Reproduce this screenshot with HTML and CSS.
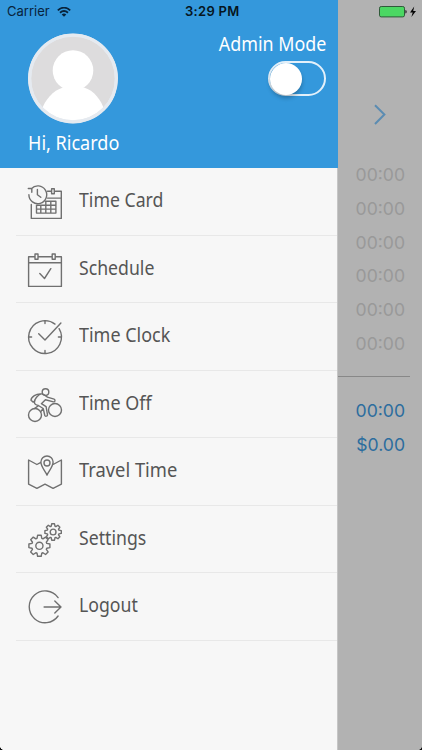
FILE: index.html
```html
<!DOCTYPE html>
<html lang="en">
<head>
<meta charset="utf-8">
<title>Time Menu</title>
<link rel="stylesheet" href="styles.css">
</head>
<body>
<div class="screen">
  <aside class="drawer">
    <header class="profile">
      <div class="person">
        <svg class="avatar" viewBox="0 0 90 90">
          <defs><clipPath id="face"><circle cx="45" cy="45" r="42"/></clipPath></defs>
          <circle cx="45" cy="45" r="45" fill="#e5eaf0"/>
          <circle cx="45" cy="45" r="42" fill="#dddcdd"/>
          <g clip-path="url(#face)" fill="#fff"><circle cx="45" cy="37" r="20.3"/><path d="M13 78C17 66 25 57 35 54Q45 52 56 54C66 57 73 66 77 78V90H13Z"/></g>
          <circle cx="45" cy="45" r="43.2" fill="none" stroke="#e5eaf0" stroke-width="3"/>
        </svg>
        <div class="greeting"><span>Hi, Ricardo</span></div>
      </div>
      <div class="mode"><span class="mode-label">Admin Mode</span><div class="toggle"><div class="knob"></div></div></div>
    </header>
    <nav class="menu">
      <div class="item"><svg class="icon" viewBox="0 0 34 34"><path d="M19.5 6.3h4M27.5 6.3H33.3V33.4H3.3V19.5M19.5 13.1H33.3M23.6 3.8h2.7v5h-2.7zM17.3 16.3H27.9V28.1H8.5V20.2H27.9M8.5 24.1H27.9M12.8 20.2v7.9M17.8 16.3v11.8M22.8 16.3v11.8"/><path d="M3.3 3.7A8.9 8.9 0 1 1 .9 9.8M.3 3.5h3.5v3.7M9.4 4.5v5.3l3.4 2.5"/></svg><span>Time Card</span></div>
      <div class="item"><svg class="icon" viewBox="0 0 34 34"><path d="M7 3.7H.6V33.4H33.4V3.7H27.2M10 3.7H24.2M.6 9.7H33.4M7 1h3v5.3H7zM24.2 1h3v5.3h-3zM11.8 20.5l4.7 5 6.3-9.8"/></svg><span>Schedule</span></div>
      <div class="item medium"><svg class="icon" viewBox="0 0 34 34"><path d="M27 4.1A16.4 16.4 0 1 0 31.1 8.7M17 .6v3M17 30.4v3M.6 17h3M30.4 17h3M10.7 13.8L17 20 32.9 3"/></svg><span>Time Clock</span></div>
      <div class="item medium"><svg class="icon" viewBox="0 0 34 34"><circle cx="7" cy="27" r="6.5"/><circle cx="27" cy="22" r="6.5"/><circle cx="17.5" cy="4.1" r="3.3"/><path d="M13.2 5.9C8.5 5.5 3 8.5 3 12.3L5.2 14.1 7 12.7M13.2 5.9C10 6.5 6.2 11.4 6.4 14.2C6.5 16.2 8 17 10.4 17.5L15.2 20.5 16.8 27.5C17.3 28.7 19.5 28.3 19.5 26.9L18.1 18.7 13.4 15.7 17.4 11.7 25.5 13.9C27.2 14 27.5 11.8 26.1 11.2L19.4 9.1C17.5 7.8 15.5 5.7 13.2 5.9M10.5 17.6L6.5 20.5M15 20.6L12.5 24"/></svg><span>Time Off</span></div>
      <div class="item wide"><svg class="icon" viewBox="0 0 34 34"><path d="M12.9 7.4L8.9 9.5.6 5V29.2L8.9 33.4 17 29.2 25.1 33.4 33.4 29.2V5L25.1 9.5M19 20.1C17.2 16.1 12.9 11.8 12.9 7.1A6.1 6.1 0 0 1 25.1 7.1C25.1 11.8 20.8 16.1 19 20.1Z"/><circle cx="19" cy="8" r="3"/></svg><span>Travel Time</span></div>
      <div class="item"><svg class="icon" viewBox="0 0 34 34"><defs><path id="gear" vector-effect="non-scaling-stroke" d="M-2.4-7.4L-1.8-10.5H1.8L2.4-7.4 3.54-6.93 6.15-8.7 8.7-6.15 6.93-3.54 7.4-2.4 10.5-1.8V1.8L7.4 2.4 6.93 3.54 8.7 6.15 6.15 8.7 3.54 6.93 2.4 7.4 1.8 10.5H-1.8L-2.4 7.4-3.54 6.93-6.15 8.7-8.7 6.15-6.93 3.54-7.4 2.4-10.5 1.8V-1.8L-7.4-2.4-6.93-3.54-8.7-6.15-6.15-8.7-3.54-6.93Z"/></defs><use href="#gear" transform="translate(11.4 22.8)"/><circle cx="11.4" cy="22.8" r="3.6"/><use href="#gear" transform="translate(25.1 9) scale(.78)"/><circle cx="25.1" cy="9" r="2.9"/></svg><span>Settings</span></div>
      <div class="item"><svg class="icon" viewBox="0 0 34 34"><path d="M30.1 7.6A15.9 15.9 0 1 0 30.1 26M16.1 17H33M26.8 10.9L33 17 26.8 23"/></svg><span>Logout</span></div>
    </nav>
  </aside>
  <main class="sheet">
    <svg class="next" viewBox="0 0 12 20"><path d="M1 .8L10.4 10 1 19.5"/></svg>
    <div class="hours"><div><span>00:00</span></div><div><span>00:00</span></div><div><span>00:00</span></div><div><span>00:00</span></div><div><span>00:00</span></div><div><span>00:00</span></div></div>
    <div class="totals"><div><span>00:00</span></div><div><span>$0.00</span></div></div>
  </main>
  <div class="status">
    <span class="carrier">Carrier</span>
    <svg class="wifi" viewBox="0 0 14 10"><path d="M.8 3.4Q7-2.1 13.2 3.4M3 5.8Q7 2.3 11 5.8" fill="none" stroke="#08233b" stroke-width="1.8"/><path d="M4.7 7.4Q7 5.5 9.3 7.4L7 9.7Z" fill="#08233b"/></svg>
    <span class="clock">3:29 PM</span>
    <svg class="battery" viewBox="0 0 38 12"><rect x=".5" y=".5" width="25" height="10.4" rx="1.7" fill="#4bd763" stroke="#30593a"/><path d="M26.4 4q1.3.1 1.3 1.8t-1.3 1.8z" fill="#222"/><path d="M35.2.6L31 6.5h2.7L32.4 11 37 4.9h-2.8z" fill="#050505"/></svg>
  </div>
  <i class="corner left"></i><i class="corner right"></i>
</div>
</body>
</html>
```
FILE: styles.css
```css
* { box-sizing: border-box; }
body { margin: 0; }
.screen { position: relative; display: flex; width: 422px; height: 750px; overflow: hidden; background: #b2b2b2; }
.drawer { width: 338px; height: 750px; background: #f7f7f7; font: 19px/26px "Noto Sans", sans-serif; border-right: 1px solid #c6c6c6; }
.profile { display: flex; justify-content: space-between; height: 168px; margin-right: -1px; padding: 33px 12px 0 28px; background: #3498dc; color: #fff; }
.avatar { display: block; width: 90px; height: 91px; }
.greeting { margin-top: 6px; white-space: nowrap; }
.greeting span { display: inline-block; transform: scaleX(.95); transform-origin: left; }
.mode { display: flex; flex-direction: column; align-items: flex-end; margin-top: -2px; }
.mode-label { transform: scaleX(.94); transform-origin: right; }
.toggle { width: 58px; height: 35px; margin-top: 4px; border: 2px solid #e3f0fa; border-radius: 18px; }
.knob { width: 32px; height: 32px; margin-top: -.5px; border-radius: 50%; background: #fff; box-shadow: 0 3px 4px rgba(0,0,0,.25); }
.menu { display: grid; grid-auto-rows: 67.5px; margin-left: 16px; }
.item { display: flex; align-items: flex-start; gap: 17px; padding: 17px 0 0 12px; border-bottom: 1px solid #e8e8e8; color: #555; }
.item span { margin-top: 2px; transform: scaleX(.93); transform-origin: left; }
.medium span { transform: scaleX(.945); }
.wide span { transform: scaleX(.965); }
.icon { width: 34px; height: 34px; overflow: visible; fill: none; stroke: #707070; stroke-width: 1.4; stroke-linejoin: round; stroke-linecap: round; }
.sheet { flex: 1; padding: 104px 12px 0 0; font: 17.6px/33.8px Inter, sans-serif; text-align: right; }
.next { display: block; width: 12px; height: 21px; margin-left: 36px; fill: none; stroke: #5b8cb2; stroke-width: 2; }
.hours { height: 252px; padding: 33px 5px 0 0; border-bottom: 1px solid #888; color: #999; }
.totals { padding: 17px 5px 0 0; color: #2c6d9e; }
.status { position: absolute; top: 0; left: 0; display: grid; grid-template-columns: 57px 128px 194px 38px; align-items: center; width: 422px; height: 23px; font: 13px/23px Inter, sans-serif; }
.carrier { padding-left: 7px; color: #08233b; }
.wifi { width: 14px; height: 10px; }
.clock { color: #061521; font-weight: 600; letter-spacing: .3px; }
.battery { width: 38px; height: 12px; }
.corner { position: absolute; bottom: 0; width: 5px; height: 5px; }
.left { left: 0; background: radial-gradient(circle at 5px 0, transparent 5px, #111 5.5px); }
.right { right: 0; background: radial-gradient(circle at 0 0, transparent 5px, #111 5.5px); }
```
